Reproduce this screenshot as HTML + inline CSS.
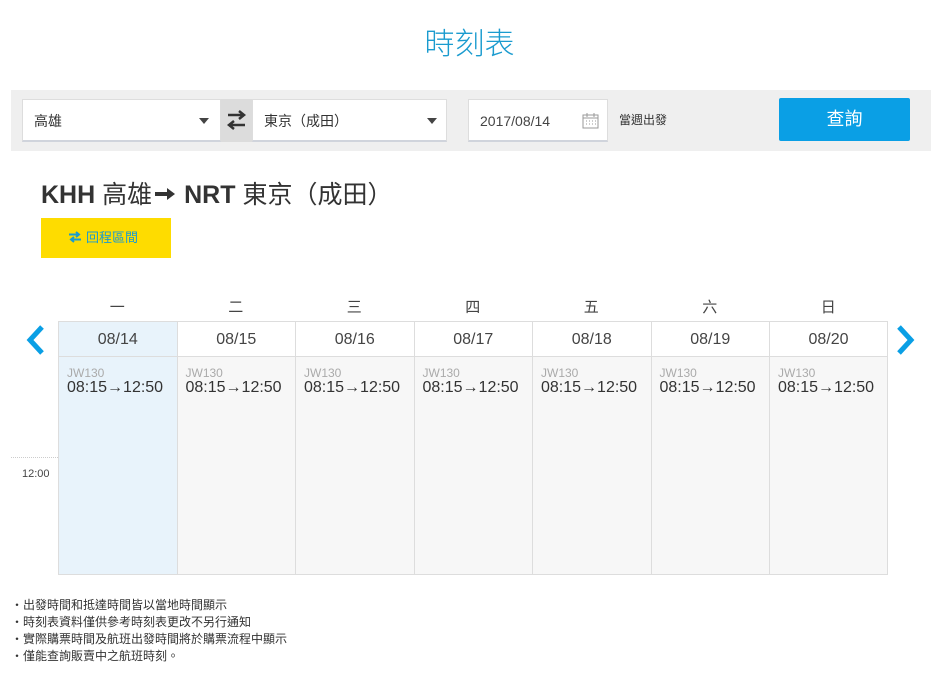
<!DOCTYPE html>
<html><head><meta charset="utf-8"><style>
*{box-sizing:border-box;margin:0;padding:0}
body{width:939px;height:675px;background:#fff;font-family:"Liberation Sans","Noto Sans CJK TC",sans-serif;color:#333;position:relative;overflow:hidden}
.a{position:absolute}
.p{display:inline-block;width:1em;text-align:center}
.title{left:0;width:939px;top:26px;text-align:center;font-size:30px;color:#1a9bcf;line-height:38px;font-weight:300}
.bar{left:11px;top:90px;width:920px;height:61px;background:#efefef}
.sel{background:#fff;border:1px solid #ddd;border-bottom:2px solid #d0d4dc;height:43px;top:99px;font-size:14px;line-height:42px;padding-left:11px;color:#333}
.tri{position:absolute;top:18px;width:0;height:0;border-left:5px solid transparent;border-right:5px solid transparent;border-top:6px solid #444}
.col{position:absolute;top:321px;width:118.5px;height:254px;border-left:1px solid #ddd;background:#f7f7f7}
.col .h{height:36px;line-height:36px;text-align:center;font-size:16px;color:#444;background:#fff;border-bottom:1px solid #ddd;border-top:1px solid #ddd}
.col .f{font-size:12px;color:#aaa;margin:10px 0 0 8px;line-height:12px}
.col .t{font-size:16px;color:#333;margin-left:8px;line-height:18px}
.dn{position:absolute;top:296px;width:118.5px;text-align:center;font-size:15px;color:#444}
.notes{left:11px;top:597px;font-size:12px;line-height:17px;color:#333}
</style></head><body>
<div class="a title">時刻表</div>
<div class="a bar"></div>
<div class="a sel" style="left:22px;width:199px">高雄<span class="tri" style="left:176px"></span></div>
<div class="a" style="left:221px;top:99px;width:31px;height:43px;background:#dcdcdc">
<svg width="31" height="43" viewBox="0 0 31 43"><path d="M7 16h15M18 12l5 4-5 4M24 26H9M13 22l-5 4 5 4" stroke="#333" stroke-width="2.5" fill="none"/></svg></div>
<div class="a sel" style="left:252px;width:195px">東京<span class="p">（</span>成田<span class="p">）</span><span class="tri" style="left:174px"></span></div>
<div class="a sel" style="left:468px;width:140px;color:#444">2017/08/14
<svg class="a" style="left:113px;top:12px" width="17" height="17" viewBox="0 0 17 17"><rect x="1" y="3" width="15" height="13" fill="none" stroke="#999"/><line x1="1" y1="6" x2="16" y2="6" stroke="#999"/><path d="M5 1v4M12 1v4" stroke="#999"/><path d="M4 9h1M7 9h1M10 9h1M13 9h1M4 12h1M7 12h1M10 12h1M13 12h1" stroke="#999"/></svg></div>
<div class="a" style="left:619px;top:111px;font-size:12px;color:#333">當週出發</div>
<div class="a" style="left:779px;top:98px;width:131px;height:43px;background:#0a9fe5;border-radius:2px;color:#fff;font-size:18px;text-align:center;line-height:43px">查詢</div>
<div class="a" style="left:41px;top:179px;font-size:25px;color:#333;line-height:32px;white-space:nowrap"><b>KHH</b> 高雄<svg width="22" height="18" viewBox="0 0 22 18" style="vertical-align:0px;margin:0 8px 0 2px"><path d="M1 9h13" stroke="#333" stroke-width="4"/><path d="M13 3l8 6-8 6z" fill="#333"/></svg><b>NRT</b> 東京<span class="p">（</span>成田<span class="p">）</span></div>
<div class="a" style="left:41px;top:218px;width:130px;height:40px;background:#fedc00;font-size:13px;color:#1a9bcf;line-height:40px;padding-left:27px">
<svg width="14" height="12" viewBox="0 0 14 12" style="vertical-align:-1px;margin-right:4px"><path d="M1 3.5h10M8 1l3 2.5L8 6M13 8.5H3M6 6L3 8.5 6 11" stroke="#1a9bcf" stroke-width="2" fill="none"/></svg>回程區間</div>
<div class="dn" style="left:58px">一</div><div class="dn" style="left:176.5px">二</div><div class="dn" style="left:295px">三</div><div class="dn" style="left:413.5px">四</div><div class="dn" style="left:532px">五</div><div class="dn" style="left:650.5px">六</div><div class="dn" style="left:769px">日</div>
<svg class="a" style="left:25px;top:324px" width="22" height="32" viewBox="0 0 22 32"><path d="M17 3L5 16l12 13" stroke="#0a9fe5" stroke-width="5" fill="none"/></svg>
<svg class="a" style="left:894px;top:324px" width="22" height="32" viewBox="0 0 22 32"><path d="M5 3l12 13L5 29" stroke="#0a9fe5" stroke-width="5" fill="none"/></svg>
<div class="a" style="left:11px;top:457px;width:47px;border-top:1px dotted #ccc"></div>
<div class="a" style="left:22px;top:468px;font-size:11px;color:#444">12:00</div>
<div class="col" style="left:58px;background:#e8f3fb"><div class="h" style="background:#e8f3fb">08/14</div><div class="f">JW130</div><div class="t">08:15→12:50</div></div>
<div class="col" style="left:176.5px"><div class="h">08/15</div><div class="f">JW130</div><div class="t">08:15→12:50</div></div>
<div class="col" style="left:295px"><div class="h">08/16</div><div class="f">JW130</div><div class="t">08:15→12:50</div></div>
<div class="col" style="left:413.5px"><div class="h">08/17</div><div class="f">JW130</div><div class="t">08:15→12:50</div></div>
<div class="col" style="left:532px"><div class="h">08/18</div><div class="f">JW130</div><div class="t">08:15→12:50</div></div>
<div class="col" style="left:650.5px"><div class="h">08/19</div><div class="f">JW130</div><div class="t">08:15→12:50</div></div>
<div class="col" style="left:769px;width:119px;border-right:1px solid #ddd"><div class="h">08/20</div><div class="f">JW130</div><div class="t">08:15→12:50</div></div>
<div class="a" style="left:58px;top:574px;width:830px;border-top:1px solid #ddd"></div>
<div class="a notes">‧出發時間和抵達時間皆以當地時間顯示<br>‧時刻表資料僅供參考時刻表更改不另行通知<br>‧實際購票時間及航班出發時間將於購票流程中顯示<br>‧僅能查詢販賣中之航班時刻。</div>
</body></html>
